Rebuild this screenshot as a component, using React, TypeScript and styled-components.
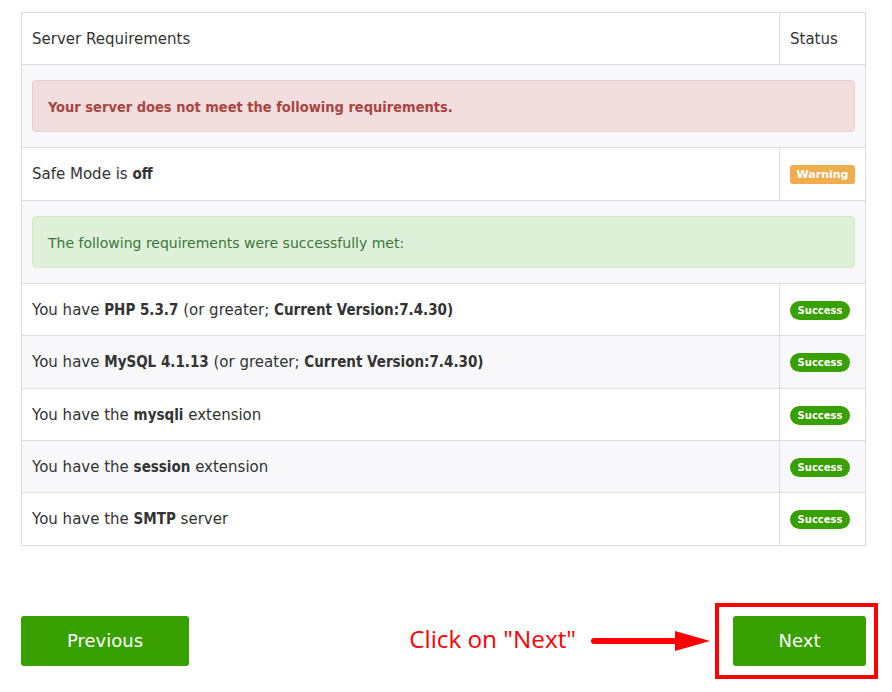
import React from "react";
import styled, { createGlobalStyle } from "styled-components";

const GlobalStyle = createGlobalStyle`
  html, body { margin: 0; padding: 0; background: #ffffff; }
  body { font-family: "DejaVu Sans", "Open Sans", sans-serif; }
`;

const Page = styled.div`
  width: 866px;
  min-height: 692px;
  box-sizing: border-box;
  padding: 12px 0 26px 21px;
  font-family: "DejaVu Sans", sans-serif;
  color: #333333;
`;

const Table = styled.table`
  width: 100%;
  border-collapse: collapse;
  border: 1px solid #dddddd;
  font-size: 15px;
`;

const Row = styled.tr<{ $striped?: boolean }>`
  background: ${(p) => (p.$striped ? "#f8f8fa" : "#ffffff")};
`;

const Cell = styled.td<{ $status?: boolean }>`
  border: 1px solid #dddddd;
  padding: 16px 10px 14px;
  line-height: 21.4px;
  height: 21.4px;
  vertical-align: middle;
  width: ${(p) => (p.$status ? "65px" : "auto")};
  white-space: nowrap;
`;

const AlertCell = styled.td`
  border: 1px solid #dddddd;
  padding: 15px 10px;
`;

const Strong = styled.b`
  font-family: "DejaVu Sans Condensed", "Liberation Sans", sans-serif;
  font-size: 15px;
  font-weight: 700;
`;

const Alert = styled.div<{ $kind: "danger" | "success" }>`
  padding: 16px 15px 14px;
  line-height: 20px;
  border-radius: 4px;
  border: 1px solid ${(p) => (p.$kind === "danger" ? "#ebccd1" : "#d6e9c6")};
  background: ${(p) => (p.$kind === "danger" ? "#f2dede" : "#dff0d8")};
  color: ${(p) => (p.$kind === "danger" ? "#a94442" : "#3c763d")};
  font-family: ${(p) =>
    p.$kind === "danger" ? `"DejaVu Sans Condensed", "DejaVu Sans", sans-serif` : `"DejaVu Sans", sans-serif`};
  font-weight: ${(p) => (p.$kind === "danger" ? 700 : 400)};
  font-size: ${(p) => (p.$kind === "danger" ? "14.5px" : "14px")};
`;

const Badge = styled.span<{ $kind: "warning" | "success" }>`
  display: inline-block;
  font-size: ${(p) => (p.$kind === "warning" ? "11px" : "10px")};
  font-weight: 700;
  line-height: 19px;
  height: 19px;
  color: #ffffff;
  background: ${(p) => (p.$kind === "warning" ? "#f0ad4e" : "#38a000")};
  border-radius: ${(p) => (p.$kind === "warning" ? "3px" : "10px")};
  width: ${(p) => (p.$kind === "warning" ? "65px" : "60px")};
  text-align: center;
  vertical-align: middle;
`;

const Footer = styled.div`
  display: flex;
  align-items: center;
  margin-top: 70px;
`;

const Button = styled.button<{ $wide?: boolean }>`
  width: ${(p) => (p.$wide ? "168px" : "133px")};
  height: 50px;
  border: none;
  border-radius: 3px;
  background: #38a000;
  color: #ffffff;
  font-family: "DejaVu Sans", sans-serif;
  font-size: 18px;
  font-weight: 500;
  cursor: pointer;
  padding: 0;
`;

const Spacer = styled.div`
  flex: 1;
`;

const Annotation = styled.div`
  display: flex;
  align-items: center;
  gap: 15px;
  margin-right: 22px;
`;

const AnnotationText = styled.span`
  font-family: "Open Sans", sans-serif;
  font-size: 24.3px;
  color: #ff0000;
  line-height: 30px;
  margin-bottom: 3px;
`;

const NextWrap = styled.div`
  position: relative;
  display: flex;
`;

const Highlight = styled.div`
  position: absolute;
  top: -13px;
  bottom: -13px;
  left: -18px;
  right: -12px;
  border: 4px solid #ff0000;
  pointer-events: none;
`;

const Arrow = () => (
  <svg width="120" height="22" viewBox="0 0 120 22">
    <line x1="3" y1="11" x2="86" y2="11" stroke="#ff0000" strokeWidth="6" strokeLinecap="round" />
    <polygon points="84,1 119,11 84,21" fill="#ff0000" />
  </svg>
);

type Item = { content: React.ReactNode };

const items: Item[] = [
  { content: <>You have <Strong>PHP 5.3.7</Strong> (or greater; <Strong>Current Version:7.4.30)</Strong></> },
  { content: <>You have <Strong>MySQL 4.1.13</Strong> (or greater; <Strong>Current Version:7.4.30)</Strong></> },
  { content: <>You have the <Strong>mysqli</Strong> extension</> },
  { content: <>You have the <Strong>session</Strong> extension</> },
  { content: <>You have the <Strong>SMTP</Strong> server</> },
];

export default function App() {
  return (
    <>
      <GlobalStyle />
      <Page>
        <Table>
          <tbody>
            <Row>
              <Cell>Server Requirements</Cell>
              <Cell $status>Status</Cell>
            </Row>
            <Row $striped>
              <AlertCell colSpan={2}>
                <Alert $kind="danger">Your server does not meet the following requirements.</Alert>
              </AlertCell>
            </Row>
            <Row>
              <Cell>
                Safe Mode is <Strong>off</Strong>
              </Cell>
              <Cell $status>
                <Badge $kind="warning">Warning</Badge>
              </Cell>
            </Row>
            <Row $striped>
              <AlertCell colSpan={2}>
                <Alert $kind="success">The following requirements were successfully met:</Alert>
              </AlertCell>
            </Row>
            {items.map((it, i) => (
              <Row key={i} $striped={i % 2 === 1}>
                <Cell>{it.content}</Cell>
                <Cell $status>
                  <Badge $kind="success">Success</Badge>
                </Cell>
              </Row>
            ))}
          </tbody>
        </Table>
        <Footer>
          <Button $wide>Previous</Button>
          <Spacer />
          <Annotation>
            <AnnotationText>Click on "Next"</AnnotationText>
            <Arrow />
          </Annotation>
          <NextWrap>
            <Button>Next</Button>
            <Highlight />
          </NextWrap>
        </Footer>
      </Page>
    </>
  );
}
